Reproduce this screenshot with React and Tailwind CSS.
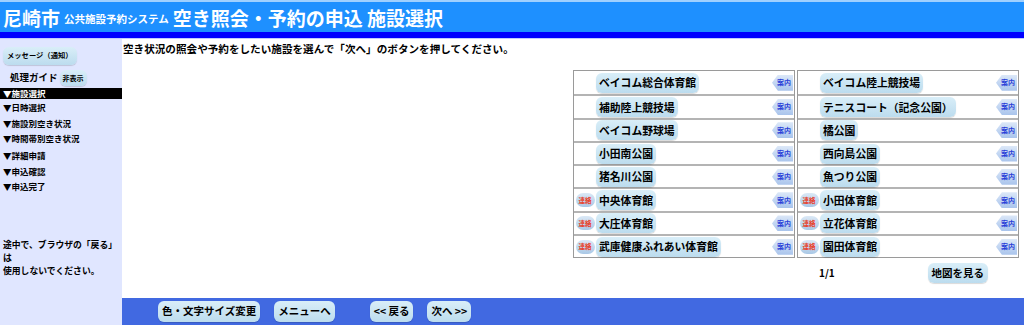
import React from 'react'

const FONT = { fontFamily: '"Noto Sans CJK JP", "Liberation Sans", sans-serif' }

const left = [
  { name: 'ベイコム総合体育館' },
  { name: '補助陸上競技場' },
  { name: 'ベイコム野球場' },
  { name: '小田南公園' },
  { name: '猪名川公園' },
  { name: '中央体育館', contact: true },
  { name: '大庄体育館', contact: true },
  { name: '武庫健康ふれあい体育館', contact: true },
]

const right = [
  { name: 'ベイコム陸上競技場' },
  { name: 'テニスコート（記念公園）' },
  { name: '橘公園' },
  { name: '西向島公園' },
  { name: '魚つり公園' },
  { name: '小田体育館', contact: true },
  { name: '立花体育館', contact: true },
  { name: '園田体育館', contact: true },
]

const btn =
  'inline-flex items-center leading-none rounded-[6px] bg-gradient-to-b from-[#d9eef8] to-[#bcdcee] shadow-[0_1px_1px_rgba(0,0,0,0.15)] font-bold text-black'

function Contact() {
  return (
    <span className="flex items-center justify-center w-[19px] h-[14px] rounded-full bg-gradient-to-b from-[#dbe9f6] to-[#a9c8e6] text-[6.5px] font-bold text-[#e8412a] leading-none">
      連絡
    </span>
  )
}

function Guide() {
  return (
    <span className="flex items-center justify-end pr-[2px] w-[21px] h-[16px] bg-gradient-to-b from-[#dce8f8] to-[#a9c4ec] text-[7px] font-bold text-[#2a3fd8] leading-none [clip-path:polygon(28%_0,100%_0,100%_100%,28%_100%,0_50%)]">
      案内
    </span>
  )
}

function Column({ rows }) {
  return (
    <div className="w-[222px] border border-[#9a9a9a] bg-white">
      {rows.map((r, i) => (
        <div
          key={r.name}
          className={`flex items-center h-[23.3px] leading-none ${i > 0 ? 'border-t-2 border-[#b4b4b4]' : ''}`}
        >
          <div className="w-[22px] flex items-center justify-center">{r.contact && <Contact />}</div>
          <div className="flex-1 flex items-center">
            <span className={`${btn} h-[20px] px-[3px] text-[10.8px]`}>{r.name}</span>
          </div>
          <div className="pr-[1px] flex items-center">
            <Guide />
          </div>
        </div>
      ))}
    </div>
  )
}

export default function App() {
  return (
    <div className="w-[1024px] h-[325px] flex flex-col bg-white overflow-hidden" style={FONT}>
      <header className="shrink-0">
        <div className="h-[2px] bg-[#9fd0ff]" />
        <div className="h-[30px] bg-[#1e90ff] flex items-center pl-[3px] text-white font-bold">
          <span className="text-[19px] leading-none">尼崎市</span>
          <span className="text-[10.5px] ml-[4px] mt-[4px] leading-none">公共施設予約システム</span>
          <span className="text-[19px] ml-[4px] leading-none">空き照会・予約の申込 施設選択</span>
        </div>
        <div className="h-[6px] bg-[#0000ff]" />
        <div className="h-px bg-[#c0ccff]" />
      </header>

      <div className="flex flex-1 min-h-0">
        <aside className="w-[122px] shrink-0 bg-[#e0e6ff] pt-[8px] font-bold text-black">
          <div className="pl-[3px] flex">
            <span className={`${btn} h-[18px] px-[4px] text-[7.3px]`}>メッセージ（通知）</span>
          </div>
          <div className="flex items-center pl-[10px] mt-[4px] h-[18px]">
            <span className="text-[9.5px] leading-none">処理ガイド</span>
            <span className={`${btn} h-[16px] px-[3px] ml-[2px] text-[7px]`}>非表示</span>
          </div>
          <div className="mt-[1px] h-[11px] bg-black text-white text-[8.5px] leading-[11px] pl-[3px]">
            ▼施設選択
          </div>
          <ul className="text-[8.5px] pl-[3px] leading-[15.5px] mt-[1px]">
            <li>▼日時選択</li>
            <li>▼施設別空き状況</li>
            <li className="mb-[1.5px]">▼時間帯別空き状況</li>
            <li>▼詳細申請</li>
            <li>▼申込確認</li>
            <li>▼申込完了</li>
          </ul>
          <p className="mt-[43px] pl-[3px] text-[8.8px] leading-[13px]">
            途中で、ブラウザの「戻る」
            <br />は<br />
            使用しないでください。
          </p>
        </aside>

        <main className="flex-1 flex flex-col min-w-0">
          <div className="flex-1 pl-[1px] pt-[3px]">
            <p className="text-[10.6px] font-bold leading-[14px]">
              空き状況の照会や予約をしたい施設を選んで「次へ」のボタンを押してください。
            </p>
            <div className="flex justify-end pr-[5px] mt-[14px]">
              <div>
                <div className="flex gap-[2px]">
                  <Column rows={left} />
                  <Column rows={right} />
                </div>
                <div className="flex">
                  <div className="w-[224px]" />
                  <div className="flex items-center w-[222px] h-[26px] pt-[4px]">
                    <span className="ml-[22px] text-[10px] font-bold leading-none">1/1</span>
                    <span className={`${btn} ml-auto mr-[31px] h-[20px] px-[4px] text-[10.5px]`}>地図を見る</span>
                  </div>
                </div>
              </div>
            </div>
          </div>
          <footer className="h-[27px] shrink-0 bg-[#4169e1] flex items-center pl-[36px]">
            <span className={`${btn} h-[21px] px-[4px] text-[10.5px]`}>色・文字サイズ変更</span>
            <span className={`${btn} h-[21px] px-[4px] text-[10.5px] ml-[14px]`}>メニューへ</span>
            <span className={`${btn} h-[21px] px-[4px] text-[10.5px] ml-[35px]`}>&lt;&lt; 戻る</span>
            <span className={`${btn} h-[21px] px-[4px] text-[10.5px] ml-[14px]`}>次へ &gt;&gt;</span>
          </footer>
        </main>
      </div>
    </div>
  )
}
